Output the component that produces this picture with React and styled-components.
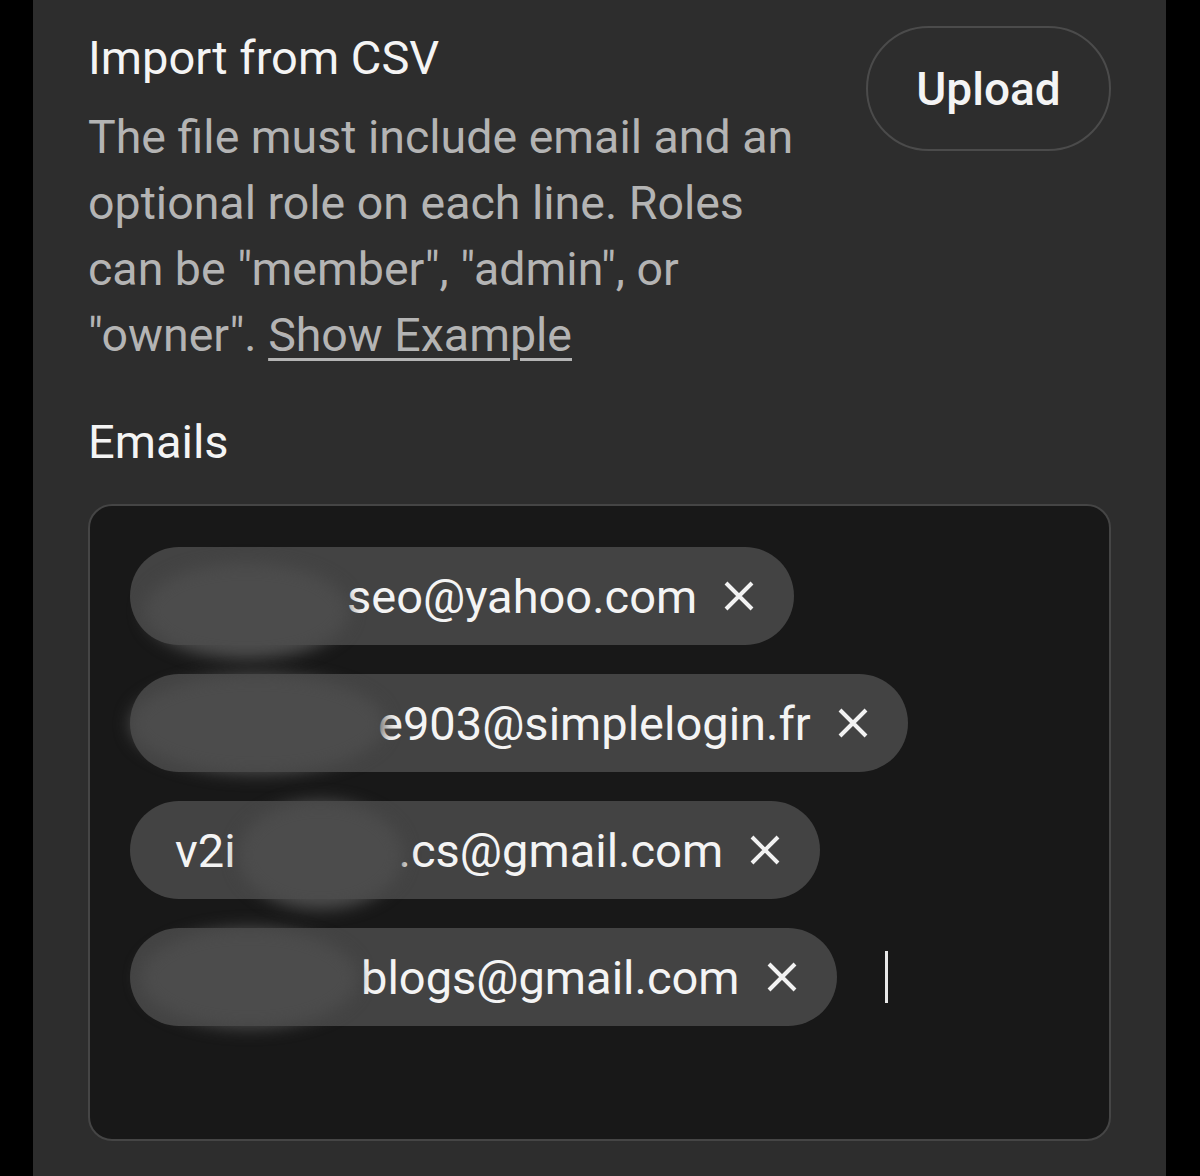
import styled, { createGlobalStyle } from "styled-components";

const Global = createGlobalStyle`
    body{
        margin: 0;
        background: #000;
        font-family: Roboto, "Liberation Sans", sans-serif;
    }
`

const emails = [
    { before: "", hidden: 172, after: "seo@yahoo.com", blob: { left: 14, top: 16, width: 205, height: 96 } },
    { before: "", hidden: 203, after: "e903@simplelogin.fr", blob: { left: 0, top: 0, width: 255, height: 100 } },
    { before: "v2i", hidden: 163, after: ".cs@gmail.com", blob: { left: 108, top: 0, width: 165, height: 108 } },
    { before: "", hidden: 186, after: "blogs@gmail.com", blob: { left: 10, top: 0, width: 218, height: 100 } },
];

function CloseIcon(){
    return (
        <svg width="30" height="30" viewBox="0 0 30 30">
            <path d="M2 2 L28 28 M28 2 L2 28" stroke="#f2f2f2" strokeWidth="4" />
        </svg>
    );
}

export default function App(){
    return (
        <>
            <Global />
            <Panel>
                <Header>
                    <Intro>
                        <Title>Import from CSV</Title>
                        <Description>
                            The file must include email and an optional role on each line. Roles can be "member", "admin", or "owner". <a>Show Example</a>
                        </Description>
                    </Intro>
                    <Upload>Upload</Upload>
                </Header>
                <Label>Emails</Label>
                <EmailBox>
                    {emails.map((e, i) => (
                        <Chip key={i}>
                            {e.before}
                            <Hidden style={{ width: e.hidden }} />
                            {e.after}
                            <Remove><CloseIcon /></Remove>
                            <Blur style={{ left: e.blob.left, top: e.blob.top, width: e.blob.width, height: e.blob.height }} />
                        </Chip>
                    ))}
                    <Caret />
                </EmailBox>
            </Panel>
        </>
    );
}

const Panel = styled.div`
    margin-left: 33px;
    width: 1133px;
    min-height: 1176px;
    box-sizing: border-box;
    background: #2d2d2d;
    padding: 0 55px;
    overflow: hidden;
`

const Header = styled.div`
    display: flex;
    justify-content: space-between;
    align-items: flex-start;
`

const Intro = styled.div`
    width: 730px;
    padding-top: 30px;
`

const Title = styled.h1`
    margin: 0;
    font-size: 47px;
    font-weight: 400;
    line-height: 56px;
    color: #f4f4f4;
`

const Description = styled.p`
    margin: 18px 0 0 0;
    font-size: 46.5px;
    line-height: 66px;
    color: #b4b4b4;

    a{
        text-decoration: underline;
        text-decoration-thickness: 3px;
        text-underline-offset: 7px;
        cursor: pointer;
    }
`

const Upload = styled.button`
    margin-top: 26px;
    width: 245px;
    height: 125px;
    border: 2px solid #4b4b4b;
    border-radius: 63px;
    background: transparent;
    color: #f4f4f4;
    font-family: Roboto, "Liberation Sans", sans-serif;
    font-size: 46px;
    font-weight: 500;
    padding: 0;
`

const Label = styled.div`
    margin-top: 46px;
    font-size: 47px;
    line-height: 56px;
    color: #f4f4f4;
`

const EmailBox = styled.div`
    margin-top: 34px;
    height: 637px;
    box-sizing: border-box;
    background: #181818;
    border: 2px solid #454545;
    border-radius: 24px;
    padding: 41px 40px 0 40px;
    display: flex;
    flex-wrap: wrap;
    align-content: flex-start;
    align-items: center;
    column-gap: 48px;
    row-gap: 29px;
`

const Chip = styled.div`
    position: relative;
    display: flex;
    align-items: center;
    height: 98px;
    padding: 0 40px 0 45px;
    border-radius: 49px;
    background: #434343;
    color: #f4f4f4;
    font-size: 47px;
    white-space: nowrap;
`

const Hidden = styled.span`
    display: inline-block;
`

const Remove = styled.span`
    display: flex;
    margin-left: 27px;
`

const Blur = styled.span`
    position: absolute;
    border-radius: 50%;
    background: #4c4c4c;
    filter: blur(8px);
`

const Caret = styled.span`
    width: 3px;
    height: 52px;
    background: #e8e8e8;
`
